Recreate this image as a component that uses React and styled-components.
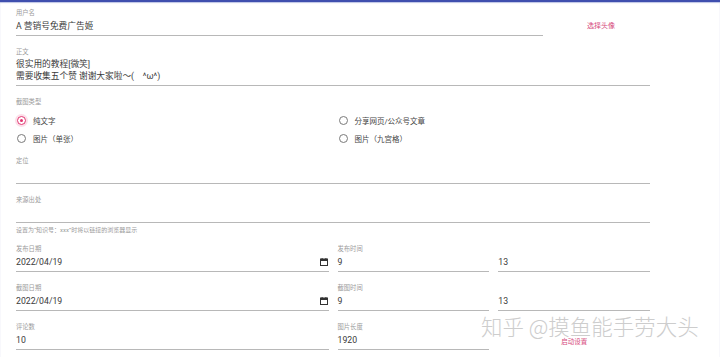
import React from "react";
import styled, { createGlobalStyle } from "styled-components";

const GlobalStyle = createGlobalStyle`
  html, body {
    margin: 0;
    padding: 0;
    background: #fff;
  }
  body {
    font-family: Roboto, "Noto Sans CJK SC", sans-serif;
  }
`;

const Page = styled.div`
  position: relative;
  min-height: 357px;
  box-sizing: border-box;
  border-top: 2px solid #3f4fae;
  box-shadow: inset 0 1px 1px rgba(63, 81, 181, 0.35);
  overflow: hidden;
`;

const Form = styled.form`
  width: 634px;
  margin-left: 16px;
  padding-top: 7px;
  display: flex;
  flex-direction: column;
  gap: 12px;
`;

const Row = styled.div`
  display: grid;
  grid-template-columns: repeat(12, minmax(0, 1fr));
  column-gap: 9px;
`;

const Field = styled.div`
  grid-column: span ${(p) => p.span || 12};
  display: flex;
  flex-direction: column;
`;

const Label = styled.div`
  font-size: 6.3px;
  line-height: 8px;
  height: 8px;
  color: #9b9b9b;
  white-space: nowrap;
`;

const Value = styled.div`
  margin-top: 3px;
  padding-bottom: 3px;
  min-height: ${(p) => (p.multiline ? 23 : 12)}px;
  border-bottom: 1px solid #b8b8b8;
  display: flex;
  align-items: center;
  justify-content: space-between;
  font-size: 8.7px;
  line-height: ${(p) => (p.multiline ? 11.5 : 12)}px;
  color: #3a3a3a;
  white-space: pre-line;
`;

const Helper = styled.div`
  margin-top: 3px;
  font-size: 6px;
  line-height: 7px;
  color: #9b9b9b;
`;

const TextButton = styled.button`
  grid-column: span ${(p) => p.span || 2};
  justify-self: center;
  align-self: end;
  margin-bottom: ${(p) => p.offset}px;
  background: none;
  border: none;
  padding: 0;
  font-family: inherit;
  font-size: ${(p) => p.size}px;
  line-height: 10px;
  color: #d64a7c;
  cursor: pointer;
`;

const RadioGroup = styled.div`
  display: flex;
  flex-direction: column;
`;

const RadioGrid = styled.div`
  margin-top: 7px;
  display: grid;
  grid-template-columns: 1fr 1fr;
  column-gap: 9px;
  row-gap: 4px;
`;

const RadioOption = styled.label`
  display: flex;
  align-items: center;
  gap: 7px;
  height: 14px;
  padding-left: 1px;
  font-size: 7.5px;
  color: #444;
`;

const RadioCircle = styled.span`
  position: relative;
  width: 9px;
  height: 9px;
  box-sizing: border-box;
  border-radius: 50%;
  border: 1px solid ${(p) => (p.checked ? "#e2336f" : "#7a7a7a")};
  box-shadow: ${(p) => (p.checked ? "0 0 0 2px rgba(233, 30, 99, 0.14)" : "none")};

  &::after {
    content: "";
    display: ${(p) => (p.checked ? "block" : "none")};
    position: absolute;
    left: 2px;
    top: 2px;
    width: 3px;
    height: 3px;
    border-radius: 50%;
    background: #e2336f;
  }
`;

const Watermark = styled.div`
  position: absolute;
  left: 481px;
  top: 311px;
  font-family: "Noto Sans CJK SC", sans-serif;
  font-weight: 300;
  font-size: 21.5px;
  line-height: 26px;
  color: #cdcdcd;
  text-shadow: 0 0 1px rgba(255, 255, 255, 0.9);
  white-space: nowrap;
  pointer-events: none;
`;

function CalendarIcon() {
  return (
    <svg width="8" height="8" viewBox="0 0 8 8" style={{ marginRight: 1 }}>
      <rect x="0.5" y="1" width="7" height="6.5" fill="none" stroke="#333" strokeWidth="1" />
      <rect x="0.5" y="1" width="7" height="2" fill="#333" />
      <rect x="1.6" y="0" width="1" height="1.5" fill="#333" />
      <rect x="5.4" y="0" width="1" height="1.5" fill="#333" />
    </svg>
  );
}

function Radio({ checked, children }) {
  return (
    <RadioOption>
      <RadioCircle checked={checked} />
      {children}
    </RadioOption>
  );
}

function TextField({ label, value, span, multiline, helper, adornment }) {
  return (
    <Field span={span}>
      <Label>{label}</Label>
      <Value multiline={multiline}>
        <span>{value}</span>
        {adornment}
      </Value>
      {helper && <Helper>{helper}</Helper>}
    </Field>
  );
}

export default function App() {
  return (
    <Page>
      <GlobalStyle />
      <Form onSubmit={(e) => e.preventDefault()}>
        <Row>
          <TextField label="用户名" value="A 营销号免费广告姬" span={10} />
          <TextButton type="button" size={7} offset={5}>
            选择头像
          </TextButton>
        </Row>
        <Row>
          <TextField
            label="正文"
            multiline
            value={"很实用的教程[微笑]\n需要收集五个赞 谢谢大家啦～(　^ω^)"}
          />
        </Row>
        <RadioGroup>
          <Label>截图类型</Label>
          <RadioGrid>
            <Radio checked>纯文字</Radio>
            <Radio>分享网页/公众号文章</Radio>
            <Radio>图片（单张）</Radio>
            <Radio>图片（九宫格）</Radio>
          </RadioGrid>
        </RadioGroup>
        <Row>
          <TextField label="定位" value="" span={12} />
        </Row>
        <Row>
          <TextField
            label="来源出处"
            value=""
            span={12}
            helper="设置为“知识号：xxx”时将以链接的浏览器显示"
          />
        </Row>
        <Row>
          <TextField label="发布日期" value="2022/04/19" span={6} adornment={<CalendarIcon />} />
          <TextField label="发布时间" value="9" span={3} />
          <TextField label={"\u00a0"} value="13" span={3} />
        </Row>
        <Row>
          <TextField label="截图日期" value="2022/04/19" span={6} adornment={<CalendarIcon />} />
          <TextField label="截图时间" value="9" span={3} />
          <TextField label={"\u00a0"} value="13" span={3} />
        </Row>
        <Row>
          <TextField label="评论数" value="10" span={6} />
          <TextField label="图片长度" value="1920" span={3} />
          <TextButton type="button" span={3} size={6.5} offset={3}>
            启动设置
          </TextButton>
        </Row>
      </Form>
      <Watermark>知乎 @摸鱼能手劳大头</Watermark>
    </Page>
  );
}
